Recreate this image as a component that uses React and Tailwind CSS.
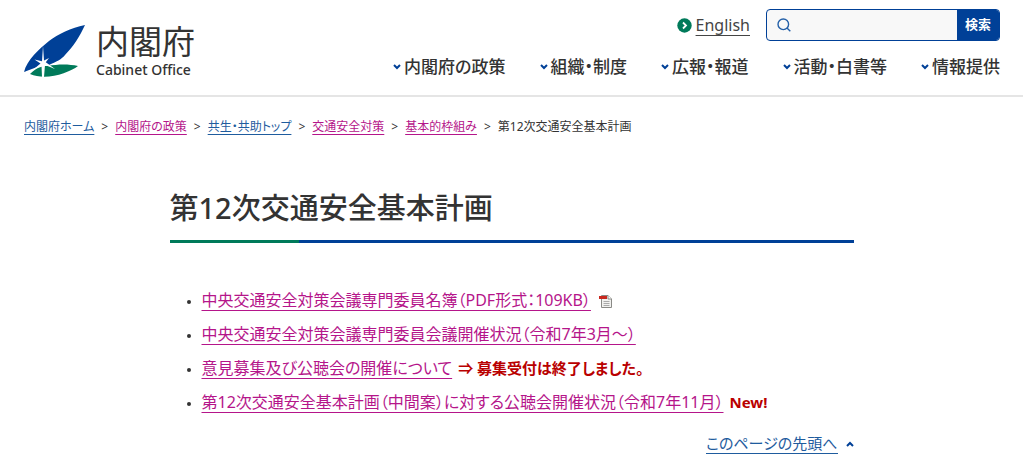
const navItems = ["内閣府の政策", "組織・制度", "広報・報道", "活動・白書等", "情報提供"];

const crumbs = [
  { label: "内閣府ホーム", visited: false },
  { label: "内閣府の政策", visited: true },
  { label: "共生・共助トップ", visited: false },
  { label: "交通安全対策", visited: true },
  { label: "基本的枠組み", visited: true },
];

const documents = [
  { title: "中央交通安全対策会議専門委員名簿（PDF形式：109KB）", pdf: true },
  { title: "中央交通安全対策会議専門委員会議開催状況（令和7年3月～）" },
  { title: "意見募集及び公聴会の開催について", note: "⇒ 募集受付は終了しました。" },
  { title: "第12次交通安全基本計画（中間案）に対する公聴会開催状況（令和7年11月）", note: "New!" },
];

const Logo = () => (
  <a href="#" className="flex items-center gap-[10px]">
    <svg width="62" height="54" viewBox="0 0 62 54" aria-hidden="true">
      <path d="M61 1C47 4 34 10 25 17C15 25 3 36 0 48C4 46 9 45 13 43L19 39L25 41C32 38 38 35 41 31C49 23 56 12 61 1Z" fill="#004097" />
      <path d="M6 50C12 44 17 42 24 42C34 40 45 40 54 42C45 49 22 57 6 50Z" fill="#007a5a" />
      <path d="M19 22L20 36.5L25 34L21.8 38.2L31 45L21 41L20 53H18L17.5 41.5L7 47.5L16.5 39.5L10.5 35.5L18 37.2Z" fill="#fff" />
    </svg>
    <span className="flex flex-col text-[#333]">
      <span className="text-[33px] leading-[37px]">内閣府</span>
      <span className="text-sm leading-[19px] font-medium">Cabinet Office</span>
    </span>
  </a>
);

const Chevron = ({ up = false }) => (
  <svg width="8" height="6" viewBox="0 0 8 6" fill="none" stroke="#004097" strokeWidth="2" aria-hidden="true">
    <path d={up ? "M1 5L4 2L7 5" : "M1 1L4 4L7 1"} />
  </svg>
);

const PdfIcon = () => (
  <svg width="13" height="13" viewBox="0 0 13 13" role="img" aria-label="PDF" className="ml-2 inline-block align-[-2px]">
    <path d="M2.5 .5H9L12.5 4V12.5H2.5Z" fill="#f1f1ef" stroke="#8a8a86" />
    <path d="M9 .5V4H12.5" fill="#fff" stroke="#8a8a86" />
    <path d="M0 1H8V4H0Z" fill="#c9281e" />
    <path d="M4.5 6.5H10.5M4.5 8.5H10.5M4.5 10.5H10.5" stroke="#aaa" />
  </svg>
);

const Header = () => (
  <header className="flex justify-between border-b-2 border-[#e5e5e5] pt-[9px] pr-[23px] pb-4 pl-6">
    <div className="pt-[14px]">
      <Logo />
    </div>
    <div className="flex flex-col items-end">
      <div className="flex items-center gap-4">
        <a href="#" className="flex items-center gap-1 text-base leading-5 text-[#444]">
          <svg width="15" height="15" viewBox="0 0 15 15" fill="none" aria-hidden="true">
            <circle cx="7.5" cy="7.5" r="7.2" fill="#007a5a" />
            <path d="M6 4.5L9 7.5L6 10.5" stroke="#fff" strokeWidth="1.8" />
          </svg>
          <span className="underline underline-offset-4">English</span>
        </a>
        <form className="flex h-8 w-[234px] overflow-hidden rounded border border-[#004097] bg-[#f8f8f8]">
          <label htmlFor="search" className="flex items-center pl-[10px]">
            <svg width="14" height="14" viewBox="0 0 14 14" fill="none" stroke="#2460a8" strokeWidth="1.4" aria-label="検索">
              <circle cx="6.3" cy="6.3" r="5.3" />
              <path d="M10 10L13.3 13.3" />
            </svg>
          </label>
          <input id="search" type="text" className="min-w-0 flex-1 px-2 text-sm outline-none" />
          <button type="button" className="w-[42px] bg-[#004097] text-[13px] font-bold text-white">
            検索
          </button>
        </form>
      </div>
      <nav className="mt-[14px]">
        <ul className="flex gap-[34px]">
          {navItems.map((item) => (
            <li key={item}>
              <a href="#" className="flex items-center gap-[3px] text-[17px] leading-6 font-medium">
                <Chevron />
                {item}
              </a>
            </li>
          ))}
        </ul>
      </nav>
    </div>
  </header>
);

const Breadcrumb = () => (
  <nav aria-label="パンくず" className="px-6 pt-5">
    <ol className="flex flex-wrap gap-[7px] text-xs leading-5">
      {crumbs.map((c) => (
        <li key={c.label} className="flex gap-[7px]">
          <a href="#" className={`underline underline-offset-[3px] ${c.visited ? "text-[#b5158a]" : "text-[#1f5c9e]"}`}>
            {c.label}
          </a>
          <span>&gt;</span>
        </li>
      ))}
      <li>第12次交通安全基本計画</li>
    </ol>
  </nav>
);

const App = () => {
  return (
    <div className="bg-white font-['Noto_Sans','Noto_Sans_CJK_JP',sans-serif] text-[#333] [font-feature-settings:'palt']">
      <Header />
      <Breadcrumb />
      <main className="mx-auto max-w-[684px] pt-[51px]">
        <h1 className="text-[29px] leading-10 font-medium">第12次交通安全基本計画</h1>
        <div className="mt-3 flex h-[3px] bg-[#004097]">
          <span className="w-[19%] bg-[#007a5a]" />
        </div>
        <ul className="mt-11 list-disc space-y-2 pl-8 text-base leading-[26px] marker:text-xs">
          {documents.map((d) => (
            <li key={d.title}>
              <a href="#" className="text-[#b5158a] underline underline-offset-4">
                {d.title}
              </a>
              {d.pdf && <PdfIcon />}
              {d.note && <strong className="ml-[6px] text-[15px] font-bold text-[#b90000]">{d.note}</strong>}
            </li>
          ))}
        </ul>
        <p className="mt-[18px] flex justify-end">
          <a href="#" className="flex items-center gap-2 text-[15px] leading-5 text-[#1f5c9e]">
            <span className="border-b border-[#1f5c9e]">このページの先頭へ</span>
            <Chevron up />
          </a>
        </p>
      </main>
    </div>
  );
};

export default App;
